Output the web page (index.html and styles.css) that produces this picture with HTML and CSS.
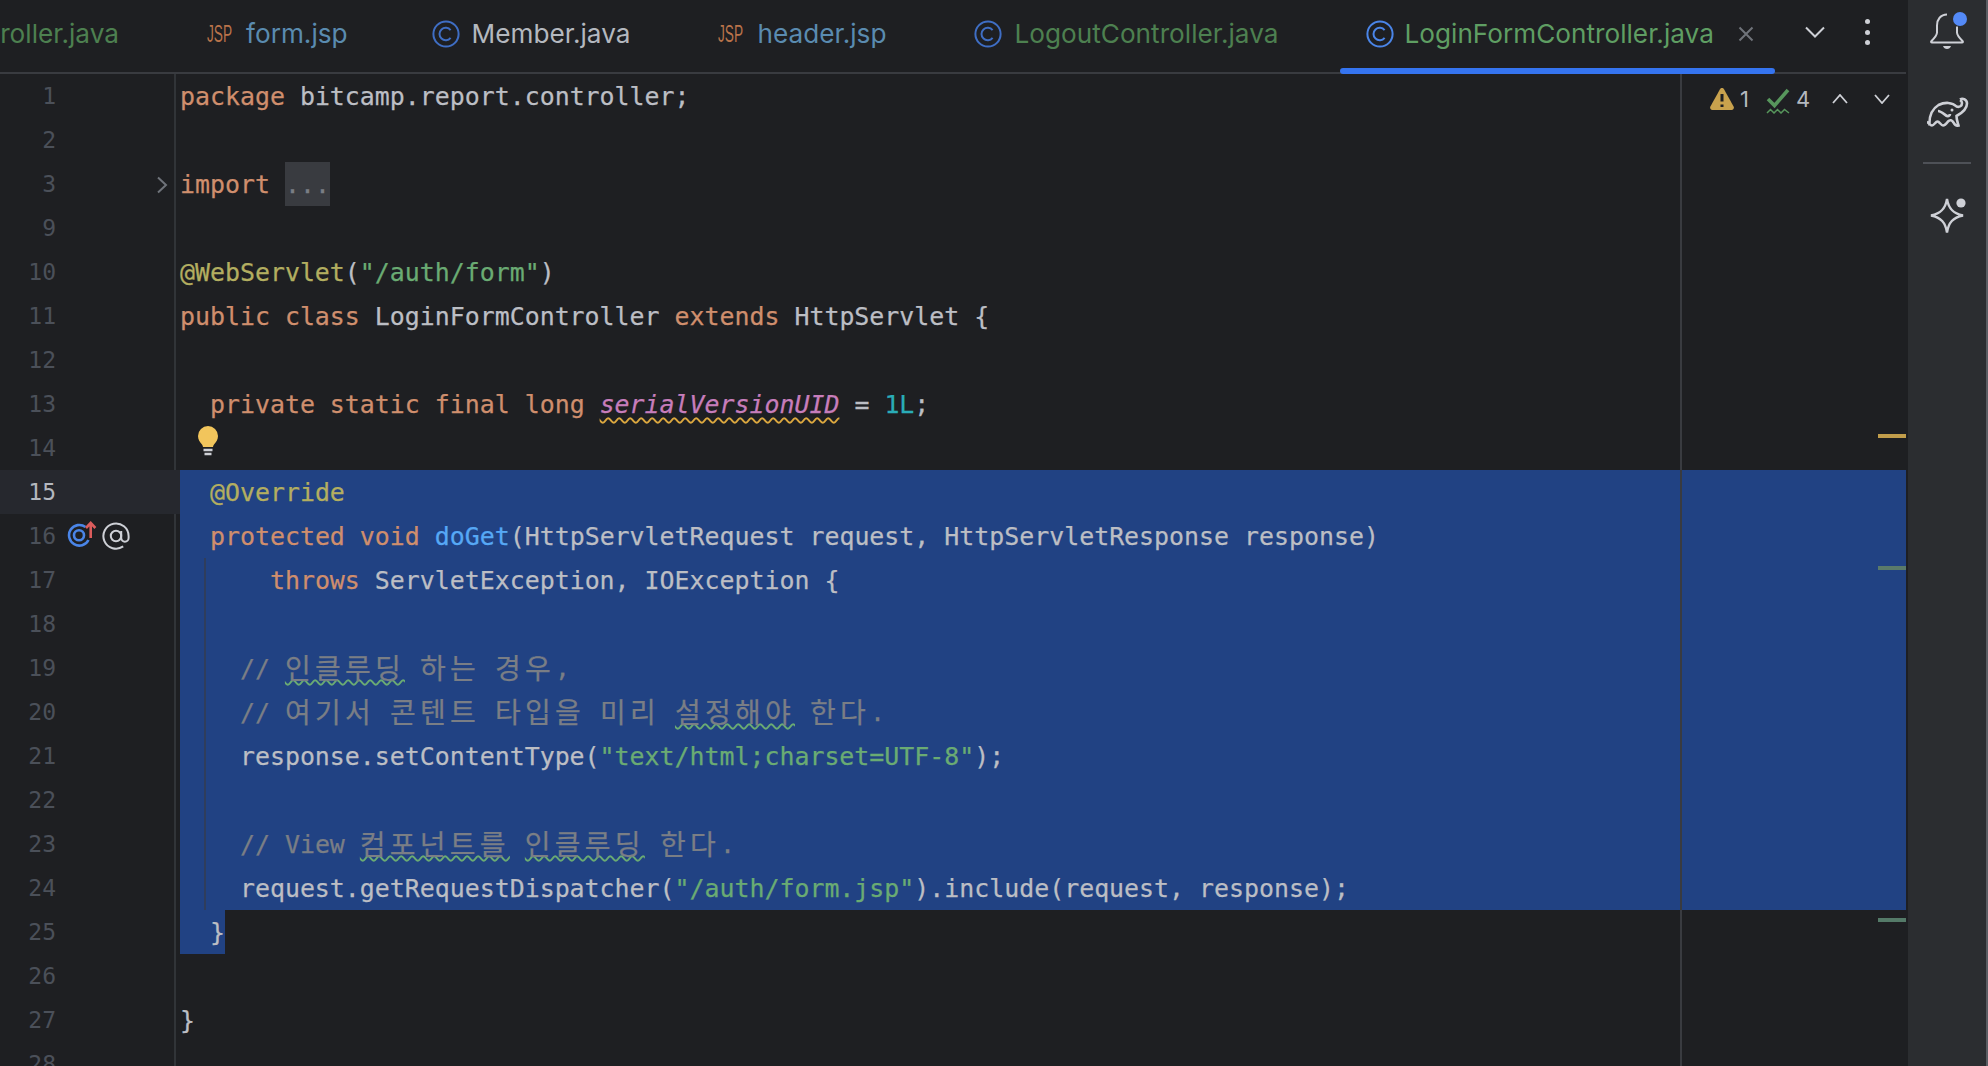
FILE: index.html
```html
<!DOCTYPE html>
<html lang="ko">
<head>
<meta charset="utf-8">
<title>LoginFormController.java</title>
<link rel="stylesheet" href="styles.css">
</head>
<body>
<div class="app">
  <main class="main">
    <header class="tabs">
      <div class="tab tab-clip"><span class="t-green">roller.java</span></div>
      <div class="tab tab-tight"><span class="jsp"><span class="jsp-t">JSP</span></span><span class="t-blue">form.jsp</span></div>
      <div class="tab"><svg class="cls" viewBox="0 0 28 28"><circle cx="14" cy="14" r="12.6"/><path d="M18.6 10.2a6.2 6.2 0 1 0 0 7.6"/></svg><span class="t-plain">Member.java</span></div>
      <div class="tab"><span class="jsp"><span class="jsp-t">JSP</span></span><span class="t-blue">header.jsp</span></div>
      <div class="tab"><svg class="cls" viewBox="0 0 28 28"><circle cx="14" cy="14" r="12.6"/><path d="M18.6 10.2a6.2 6.2 0 1 0 0 7.6"/></svg><span class="t-green">LogoutController.java</span></div>
      <div class="tab tab-active"><svg class="cls" viewBox="0 0 28 28"><circle cx="14" cy="14" r="12.6"/><path d="M18.6 10.2a6.2 6.2 0 1 0 0 7.6"/></svg><span class="t-green-on">LoginFormController.java</span><svg class="close" viewBox="0 0 16 16"><path d="M1.5 1.5l13 13M14.5 1.5l-13 13"/></svg></div>
      <div class="tab-actions">
        <svg class="chev-big" viewBox="0 0 20 12"><path d="M1 1.500l9 9 9-9"/></svg>
        <div class="dots"><i></i><i></i><i></i></div>
      </div>
    </header>
    <section class="editor">
      <div class="gutter">
        <div class="g"><span class="n">1</span></div>
        <div class="g"><span class="n">2</span></div>
        <div class="g"><span class="n">3</span><svg class="fold" viewBox="0 0 12 18"><path d="M2 1.5l8 7.5-8 7.5"/></svg></div>
        <div class="g"><span class="n">9</span></div>
        <div class="g"><span class="n">10</span></div>
        <div class="g"><span class="n">11</span></div>
        <div class="g"><span class="n">12</span></div>
        <div class="g"><span class="n">13</span></div>
        <div class="g"><span class="n">14</span></div>
        <div class="g g-cur"><span class="n">15</span></div>
        <div class="g"><span class="n">16</span>
          <svg class="over" viewBox="0 0 36 30"><path class="ring" d="M18.500 6a10.300 10.300 0 1 0 3 13"/><circle class="ring" cx="12" cy="14.300" r="5"/><path class="up" d="M23.700 17V2M19 7l4.700-5 4.700 5"/></svg>
          <svg class="at" viewBox="0 0 28 28"><circle cx="14" cy="14" r="5.200"/><path d="M19.200 9v7a3.700 3.700 0 0 0 7.400 0V14a12.600 12.600 0 1 0-5.400 10.400"/></svg>
        </div>
        <div class="g"><span class="n">17</span></div>
        <div class="g"><span class="n">18</span></div>
        <div class="g"><span class="n">19</span></div>
        <div class="g"><span class="n">20</span></div>
        <div class="g"><span class="n">21</span></div>
        <div class="g"><span class="n">22</span></div>
        <div class="g"><span class="n">23</span></div>
        <div class="g"><span class="n">24</span></div>
        <div class="g"><span class="n">25</span></div>
        <div class="g"><span class="n">26</span></div>
        <div class="g"><span class="n">27</span></div>
        <div class="g"><span class="n">28</span></div>
      </div>
      <div class="code">
        <div class="line"><span class="k">package</span> bitcamp.report.controller;</div>
        <div class="line"></div>
        <div class="line"><span class="k">import</span> <span class="foldbox">...</span></div>
        <div class="line"></div>
        <div class="line"><span class="a">@WebServlet</span>(<span class="s">"/auth/form"</span>)</div>
        <div class="line"><span class="k">public class</span> LoginFormController <span class="k">extends</span> HttpServlet {</div>
        <div class="line"></div>
        <div class="line">  <span class="k">private static final long</span> <span class="f">serialVersionUID</span> = <span class="num">1L</span>;</div>
        <div class="line line-bulb"><svg class="bulb" viewBox="0 0 20 30"><path class="glass" d="M10 0a10 10 0 0 0-10 10c0 3.800 2 6 3.600 8 .9 1.200 1.200 2 1.400 3h10c.2-1 .5-1.800 1.400-3 1.600-2 3.600-4.200 3.600-8a10 10 0 0 0-10-10z"/><path class="base" d="M5.500 24h9M6.500 28h7"/></svg></div>
        <div class="line sel">  <span class="a">@Override</span></div>
        <div class="line sel">  <span class="k">protected void</span> <span class="m">doGet</span>(HttpServletRequest request, HttpServletResponse response)</div>
        <div class="line sel">      <span class="k">throws</span> ServletException, IOException {</div>
        <div class="line sel"></div>
        <div class="line sel">    <span class="c">// <span class="kr u">인클루딩</span> <span class="kr">하는</span> <span class="kr">경우</span>,</span></div>
        <div class="line sel">    <span class="c">// <span class="kr">여기서</span> <span class="kr">콘텐트</span> <span class="kr">타입을</span> <span class="kr">미리</span> <span class="kr u">설정해야</span> <span class="kr">한다</span>.</span></div>
        <div class="line sel">    response.setContentType(<span class="s">"text/html;charset=UTF-8"</span>);</div>
        <div class="line sel"></div>
        <div class="line sel">    <span class="c">// View <span class="kr u">컴포넌트를</span> <span class="kr u">인클루딩</span> <span class="kr">한다</span>.</span></div>
        <div class="line sel">    request.getRequestDispatcher(<span class="s">"/auth/form.jsp"</span>).include(request, response);</div>
        <div class="line"><span class="sel-part">  }</span></div>
        <div class="line"></div>
        <div class="line">}</div>
        <div class="line"></div>
      </div>
      <div class="indent-guide"></div>
      <div class="margin-line"></div>
      <div class="inspect">
        <svg class="warn" viewBox="0 0 24 22"><path class="tri" d="M12 0c.9 0 1.600.5 2 1.200l9.600 17.300c.8 1.500-.2 3.500-2 3.500H2.400c-1.800 0-2.800-2-2-3.500L10 1.200C10.400.5 11.100 0 12 0z"/><path class="ex" d="M12 6v7.500M12 16.500v2.500"/></svg>
        <span class="cnt cnt-1">1</span>
        <svg class="ok" viewBox="0 0 24 26"><path class="tick" d="M2 11l6.500 6.500L22 2"/><path class="wave" d="M1 25l3.500-3.500L8 25l3.500-3.500L15 25l3.500-3.500L23 25"/></svg>
        <span class="cnt">4</span>
        <svg class="chev-sm chev-up" viewBox="0 0 16 10"><path d="M1 9l7-8 7 8"/></svg>
        <svg class="chev-sm" viewBox="0 0 16 10"><path d="M1 1l7 8 7-8"/></svg>
      </div>
      <div class="mark mark-y"></div>
      <div class="mark mark-g1"></div>
      <div class="mark mark-g2"></div>
    </section>
  </main>
  <aside class="side">
    <div class="bell-wrap">
      <svg class="bell" viewBox="0 0 38 40"><path d="M19 2.500c-6.500 0-10 5-10 11v7c0 3-2 5-5.500 8.500-.8.800-.4 1.500.5 1.500h30c.9 0 1.300-.7.500-1.500-3.500-3.500-5.500-5.500-5.500-8.500v-6"/><path class="clap" d="M15 34h8c-.6 2-2.200 3-4 3s-3.400-1-4-3z"/></svg>
      <span class="bell-dot"></span>
    </div>
    <svg class="gradle" viewBox="0 0 42 32"><path d="M2.500 29.500C2 21 5 13 11.500 9c6-3 14-3 18 1.500 3 1 5.500-.5 5.500-3.500 0-1.500-1-2.500-2-3M33 3.500c3-2 7 .5 7 4 0 5.500-5 9.500-10.500 12.500 0 3.500 1 6 2 9.500-2 .5-4-1-5-3-1.500-2.500-3.500-3-5.500-1-1.500 2-3 4-5 4s-3.500-4-5.500-4-3.500 4-5.500 4-3-3-5-3.500"/><path d="M11 15c3 0 7 4 9 5 2 .5 3-1 3-2"/><circle class="eye" cx="25" cy="14" r="1.500"/></svg>
    <div class="side-rule"></div>
    <svg class="spark" viewBox="0 0 38 38"><path d="M18 2c1.500 9.500 6 14.500 16 16.500-10 2-14.500 7-16 17-1.500-10-6-15-16-17C12 16.500 16.500 11.500 18 2z"/><circle class="spark-dot" cx="32" cy="6" r="4.600"/></svg>
  </aside>
</div>
</body>
</html>
```
FILE: styles.css
```css
* { box-sizing: border-box; }
html, body { margin: 0; padding: 0; height: 100%; background: #1e1f22; overflow: hidden; }
.app { display: flex; width: 1988px; height: 1066px; overflow: hidden; }
.main { width: 1908px; padding-right: 2px; display: flex; flex-direction: column; }

.tabs { height: 74px; flex: none; display: flex; border-bottom: 2px solid #393b40; font: 26.2px/1 "Inter", sans-serif; }
.tab { position: relative; display: flex; align-items: center; gap: 12px; padding: 0 44px 6px; height: 74px; white-space: nowrap; }
.tab-clip { width: 163px; padding-left: 0; justify-content: flex-end; overflow: hidden; }
.tab-tight { padding-right: 40px; }
.tab-active { padding-left: 26px; padding-right: 21px; margin-left: 18px; gap: 10px; }
.tab-active::after { content: ""; position: absolute; left: 0; right: 0; bottom: 0; height: 6px; border-radius: 3px; background: #3574f0; }
.t-green { color: #4d8050; }
.t-green-on { color: #5f9e63; }
.t-blue { color: #5a8bb0; }
.t-plain { color: #b4b8bf; }
.jsp { display: block; width: 27px; height: 22px; overflow: visible; }
.jsp-t { display: block; width: 44px; font: 24px/22px "Liberation Sans", sans-serif; color: #b9734a; transform: scaleX(.57); transform-origin: left center; }
.cls { width: 28px; height: 28px; fill: none; stroke: #3f6ec4; stroke-width: 2; }
.tab-active .cls { stroke: #4a85e8; }
.close { width: 16px; height: 16px; margin-left: 14px; fill: none; stroke: #6f737a; stroke-width: 2; }
.tab-actions { display: flex; align-items: center; margin-left: 30px; padding-bottom: 8px; }
.chev-big { width: 20px; height: 12px; fill: none; stroke: #ced0d6; stroke-width: 2; }
.dots { display: flex; flex-direction: column; gap: 5.500px; margin-left: 40px; }
.dots i { display: block; width: 5px; height: 5px; border-radius: 50%; background: #ced0d6; }

.editor { position: relative; flex: 1; display: flex; min-height: 0; overflow: hidden; }
.gutter { width: 180px; flex: none; }
.g { position: relative; display: flex; align-items: center; height: 44px; width: 176px; border-right: 2px solid #313438; }
.g-cur { width: 180px; background: #26282e; border-right: 0; }
.n { width: 56px; text-align: right; font: 23px/46px "DejaVu Sans Mono", monospace; color: #4b5059; flex: none; }
.g-cur .n { color: #b4b8bf; }
.fold { position: absolute; left: 156px; top: 14px; width: 12px; height: 18px; fill: none; stroke: #6f737a; stroke-width: 2; }
.over { width: 36px; height: 30px; margin-left: 11px; fill: none; }
.ring { stroke: #4a85e8; stroke-width: 2.600; }
.up { stroke: #db5c5c; stroke-width: 2.600; }
.at { width: 28px; height: 28px; margin-left: -1px; fill: none; stroke: #ced0d6; stroke-width: 2; }

.code { flex: 1; min-width: 0; font: 24.9px/46px "DejaVu Sans Mono", "Noto Sans CJK KR", monospace; color: #bcbec4; font-variant-ligatures: none; -webkit-text-stroke: .25px; }
.line { height: 44px; white-space: pre; }
.sel { background: #214283; }
.sel-part { display: inline-block; height: 44px; background: #214283; vertical-align: top; }
.k { color: #cf8e6d; }
.a { color: #b3ae60; }
.s { color: #6aab73; }
.num { color: #2aacb8; }
.m { color: #56a8f5; }
.f { color: #c77dbb; font-style: italic; text-decoration: underline wavy #dca83f 1.500px; text-underline-offset: 4px; }
.c { color: #7a7e85; }
.kr { font-family: "Noto Sans CJK KR", sans-serif; font-size: 28px; letter-spacing: 4.240px; line-height: 1; vertical-align: -2px; }
.u { text-decoration: underline wavy #6aab73 1.500px; text-underline-offset: 0; }
.foldbox { display: inline-block; height: 44px; width: 45px; background: #393b40; color: #7a7e85; vertical-align: top; }
.line-bulb { padding: 0 0 0 18px; }
.bulb { display: block; width: 20px; height: 30px; }
.glass { fill: #f2c55c; }
.base { fill: none; stroke: #ced0d6; stroke-width: 2.400; }

.indent-guide { position: absolute; left: 204px; top: 484px; width: 2px; height: 352px; background: #2f3d5c; }
.margin-line { position: absolute; left: 1680px; top: 0; bottom: 0; width: 2px; background: #393b40; }
.inspect { position: absolute; left: 1710px; top: 12px; height: 26px; display: flex; align-items: center; font: 22px/1 "Inter", sans-serif; color: #b4b8bf; }
.warn { width: 24px; height: 22px; }
.tri { fill: #c9a24d; }
.ex { fill: none; stroke: #1e1f22; stroke-width: 3; }
.cnt { margin-left: 6px; }
.cnt-1 { margin-right: 17px; }
.ok { width: 24px; height: 26px; margin-top: 4px; fill: none; }
.tick { stroke: #57965c; stroke-width: 3.600; }
.wave { stroke: #57965c; stroke-width: 1.500; }
.chev-sm { width: 16px; height: 10px; margin-left: 26px; fill: none; stroke: #ced0d6; stroke-width: 1.800; }
.chev-up { margin-left: 22px; }
.mark { position: absolute; left: 1878px; width: 28px; height: 4px; }
.mark-y { top: 360px; background: #c19d4b; }
.mark-g1 { top: 492px; background: #5a7a6a; }
.mark-g2 { top: 844px; background: #547a68; }

.side { width: 80px; flex: none; background: #2b2d30; border-right: 2px solid #5a5d63; display: flex; flex-direction: column; align-items: center; }
.bell-wrap { position: relative; width: 38px; height: 40px; margin: 12px 0 0 0; }
.bell { display: block; width: 38px; height: 40px; fill: none; stroke: #ced0d6; stroke-width: 2; }
.clap { fill: #ced0d6; stroke: none; }
.bell-dot { position: absolute; left: 25px; top: 0; width: 14px; height: 14px; border-radius: 50%; background: #548af7; }
.gradle { width: 42px; height: 32px; margin: 44px 0 0 1px; fill: none; stroke: #ced0d6; stroke-width: 2.600; }
.eye { fill: #ced0d6; stroke: none; }
.side-rule { width: 48px; height: 2px; background: #4e5157; margin-top: 34px; }
.spark { width: 38px; height: 38px; margin: 33px 0 0 2px; fill: none; stroke: #ced0d6; stroke-width: 2.400; }
.spark-dot { fill: #ced0d6; stroke: none; }
```
